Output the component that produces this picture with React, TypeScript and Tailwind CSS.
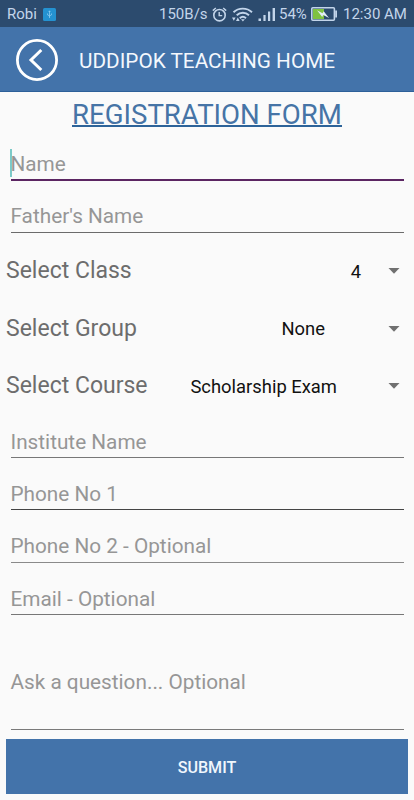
import React from 'react';

interface FieldProps {
  label: string;
  height: string;
  focused?: boolean;
  line?: string;
}

const StatusBar: React.FC = () => (
  <div className="flex h-[27px] items-center bg-[#2c4b6e] pl-[7px] pr-[7px] text-[15px] leading-none text-[#c3d5ea]">
    <span className="w-9 pt-[2px] whitespace-nowrap">Robi</span>
    <svg className="mt-px" width="13" height="13" viewBox="0 0 13 13" fill="none">
      <rect width="13" height="13" rx="1.5" fill="#2492d1" />
      <path d="M6.5 3v7M4.5 5.5v1.3l2 1.2 2-1.2V5.5M5.7 3.8l.8-1 .8 1" stroke="#9bd3f5" strokeWidth=".7" />
    </svg>
    <span className="ml-auto w-[54px] pt-[2px] pl-px whitespace-nowrap">150B/s</span>

    {/* Alarm */}
    <svg className="mr-[5px] mt-px" width="15" height="15" viewBox="0 0 15 15" fill="none" stroke="#c3d5ea">
      <circle cx="7.5" cy="8.2" r="5.7" strokeWidth="1.6" />
      <path d="M7.2 5v3.6h3M.8 3.6l3-2.6M14.2 3.6l-3-2.6" strokeWidth="1.4" />
    </svg>

    {/* Wifi */}
    <svg className="mr-[5px] mt-px" width="21" height="15" viewBox="0 0 21 15" fill="none" stroke="#c3d5ea" strokeWidth="1.9">
      <path d="M1.5 5.2C6.5.4 15 .4 20 5.2M4.7 8.2c3.5-3.3 8.8-3.3 12.3 0M7.8 11.2c1.8-1.7 4.4-1.7 6.2 0" />
      <path d="M9 12.2h3.8l-1.9 2.3z" fill="#c3d5ea" stroke="none" />
      <path d="M0 10.5h3.6l-1.8 3.3zM4 14h3.6l-1.8-3.6z" fill="#c3d5ea" stroke="none" />
    </svg>

    {/* Signal */}
    <svg className="mr-[3px] mt-px" width="18" height="14" viewBox="0 0 18 14" fill="#c3d5ea">
      <path d="M.5 11.5H3V14H.5zM5.4 8h2.2v6H5.4zM10 4.5h2.2V14H10zM14.6 1h2.4v13h-2.4z" />
    </svg>
    <span className="w-8 pt-[2px] whitespace-nowrap">54%</span>

    {/* Battery */}
    <svg className="mr-[6px] mt-px" width="26" height="14" viewBox="0 0 26 14" fill="none">
      <rect x=".8" y=".8" width="22.6" height="12.4" rx="1" stroke="#c3d5ea" strokeWidth="1.6" />
      <path d="M24.2 3.5H26v7h-1.8z" fill="#c3d5ea" />
      <path d="M2 2h11v10H2z" fill="#7fc241" />
      <path d="M6 3.2l5.5 3 1.2-2L18 11l-5.8-3-1 2z" fill="#e1edf5" />
    </svg>
    <span className="w-16 pt-[2px] whitespace-nowrap">12:30 AM</span>
  </div>
);

const Header: React.FC = () => (
  <header className="flex h-[65px] items-center border-b border-[#2d6099] bg-[#4373aa] pl-4 pt-px">
    <svg width="42" height="42" viewBox="0 0 42 42" fill="none" stroke="#fff">
      <circle cx="21" cy="21" r="19.6" strokeWidth="2.8" />
      <path d="M25.3 11L15 21l10.3 10" strokeWidth="3" />
    </svg>
    <h1 className="ml-[21px] whitespace-nowrap pt-[3px] text-[20.75px] leading-none text-[#f4f8fd]">UDDIPOK TEACHING HOME</h1>
  </header>
);

const Field: React.FC<FieldProps> = ({ label, height, focused, line = 'border-[#6b6b6b]' }) => (
  <div
    className={`ml-[10.5px] mr-[10.5px] flex items-center ${height} ${
      focused ? 'border-b-2 border-[#5b2562]' : `border-b ${line}`
    }`}
  >
    <span className="relative whitespace-nowrap text-[20.75px] leading-7 text-[#969696]">
      {focused && <i className="absolute -left-px -top-px h-7 w-[2px] bg-[#7ccac8]" />}
      {label}
    </span>
  </div>
);

const SelectRow: React.FC<{ label: string; value: string; gap: string }> = ({ label, value, gap }) => (
  <div className="flex h-[57.5px] items-center pl-[6px] pr-[14px]">
    <span className="whitespace-nowrap text-[23px] leading-none text-[#6d6d6d]">{label}</span>
    <span className={`ml-auto whitespace-nowrap pt-[2px] text-[18.4px] leading-none text-[#111] ${gap}`}>{value}</span>
    <svg className="mt-px" width="12" height="6" viewBox="0 0 12 6" fill="#707070">
      <path d="M.5 0h11L6 5.7z" />
    </svg>
  </div>
);

const App: React.FC = () => {
  return (
    <div className="h-[800px] w-full overflow-hidden bg-[#fafafa] font-['Roboto',sans-serif]">
      <StatusBar />
      <Header />

      <main>
        <div className="flex h-[54px] justify-center pt-[6px]">
          <div className="h-[29px] border-b-2 border-[#2d6399]">
            <h2 className="whitespace-nowrap pt-px text-[27.6px] leading-8 text-[#4674a6]">REGISTRATION FORM</h2>
          </div>
        </div>

        <Field label="Name" height="h-[35px] pt-[2px]" focused />
        <Field label="Father's Name" height="h-[52px] pt-[19px]" />

        <div className="pt-[9px]">
          <SelectRow label="Select Class" value="4" gap="mr-[27px]" />
          <SelectRow label="Select Group" value="None" gap="mr-[63px]" />
          <SelectRow label="Select Course" value="Scholarship Exam" gap="mr-[51px]" />
        </div>

        <Field label="Institute Name" height="h-[43.5px] pt-[13px]" line="border-[#777]" />
        <Field label="Phone No 1" height="h-[52px] pt-[21px]" line="border-[#444]" />
        <Field label="Phone No 2 - Optional" height="h-[52.5px] pt-[21px]" line="border-[#8a8a8a]" />
        <Field label="Email - Optional" height="h-[52px] pt-[21px]" line="border-[#777]" />
        <Field label="Ask a question... Optional" height="h-[115px] pt-[20px]" line="border-[#7a7a7a]" />

        <button className="mx-[6px] mt-[9px] block h-[55px] w-[402px] bg-[#4373aa] pt-[4px] text-[16.1px] font-medium leading-none text-[#f0f7fd]">
          SUBMIT
        </button>
      </main>
    </div>
  );
};

export default App;
